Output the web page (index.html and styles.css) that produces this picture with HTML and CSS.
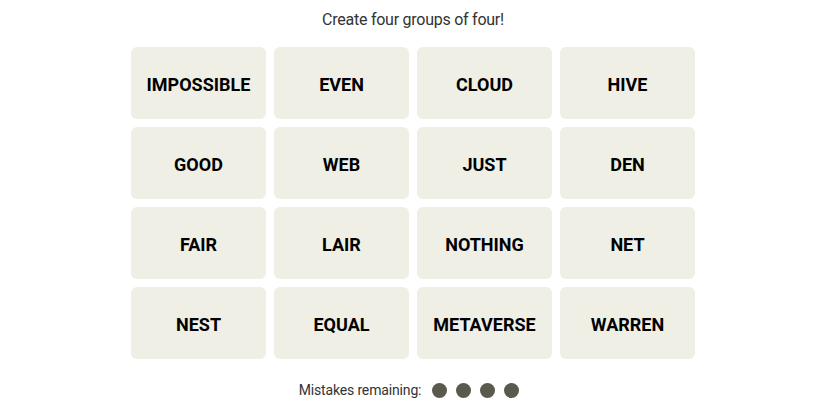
FILE: index.html
```html
<!DOCTYPE html>
<html>
<head>
<meta charset="utf-8">
<link rel="stylesheet" href="styles.css">
</head>
<body>
<main class="game">
  <p class="prompt">Create four groups of four!</p>
  <div class="board">
    <button class="tile">IMPOSSIBLE</button>
    <button class="tile">EVEN</button>
    <button class="tile">CLOUD</button>
    <button class="tile">HIVE</button>
    <button class="tile">GOOD</button>
    <button class="tile">WEB</button>
    <button class="tile">JUST</button>
    <button class="tile">DEN</button>
    <button class="tile">FAIR</button>
    <button class="tile">LAIR</button>
    <button class="tile">NOTHING</button>
    <button class="tile">NET</button>
    <button class="tile">NEST</button>
    <button class="tile">EQUAL</button>
    <button class="tile">METAVERSE</button>
    <button class="tile">WARREN</button>
  </div>
  <div class="mistakes">
    <span class="mistakes-label">Mistakes remaining:</span>
    <span class="dots">
      <span class="dot"></span>
      <span class="dot"></span>
      <span class="dot"></span>
      <span class="dot"></span>
    </span>
  </div>
</main>
</body>
</html>
```
FILE: styles.css
```css
html, body {
  margin: 0;
  padding: 0;
  background: #ffffff;
}
.game {
  display: flex;
  flex-direction: column;
  align-items: center;
  padding-top: 8px;
  padding-left: 1px;
  font-family: Roboto, "Liberation Sans", Arial, sans-serif;
}
.prompt {
  margin: 0;
  font-size: 16px;
  line-height: 24px;
  letter-spacing: -0.25px;
  color: #333333;
}
.board {
  margin-top: 15px;
  display: grid;
  grid-template-columns: repeat(4, 135px);
  grid-auto-rows: 72px;
  gap: 8px;
}
.tile {
  border: none;
  border-radius: 6px;
  background: #efefe6;
  color: #000000;
  font-family: Roboto, "Liberation Sans", Arial, sans-serif;
  font-weight: 700;
  font-size: 18px;
  padding: 2px 0 0;
  margin: 0;
}
.mistakes {
  margin-top: 19px;
  padding-right: 8px;
  display: flex;
  align-items: center;
  gap: 11px;
  height: 24px;
  font-size: 14px;
  letter-spacing: -0.15px;
  color: #333333;
}
.dots {
  display: flex;
  gap: 9px;
}
.dot {
  width: 15px;
  height: 15px;
  border-radius: 50%;
  background: #5a594e;
}
```
